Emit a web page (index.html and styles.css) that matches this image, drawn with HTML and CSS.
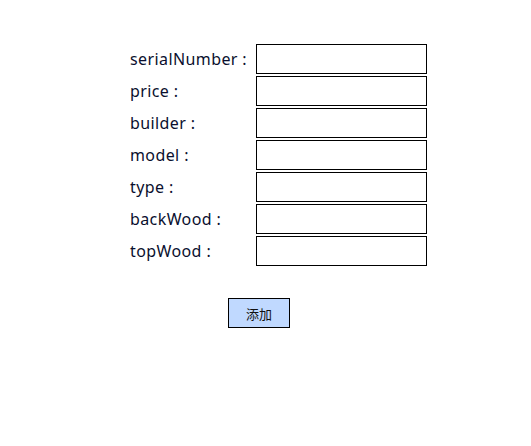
FILE: index.html
```html
<!DOCTYPE html>
<html>
<head>
<meta charset="utf-8">
<link rel="stylesheet" href="styles.css">
</head>
<body>
<form class="form">
  <div class="grid">
    <label class="lbl">serialNumber :</label><input class="inp" type="text">
    <label class="lbl">price :</label><input class="inp" type="text">
    <label class="lbl">builder :</label><input class="inp" type="text">
    <label class="lbl">model :</label><input class="inp" type="text">
    <label class="lbl">type :</label><input class="inp" type="text">
    <label class="lbl">backWood :</label><input class="inp" type="text">
    <label class="lbl">topWood :</label><input class="inp" type="text">
  </div>
  <div class="actions">
    <button class="btn" type="button">添加</button>
  </div>
</form>
</body>
</html>
```
FILE: styles.css
```css
html, body {
  margin: 0;
  padding: 0;
  background: #fff;
}
body {
  font-family: "Noto Sans", "Open Sans", "Noto Sans CJK SC", sans-serif;
  color: #0a0f2e;
}
.form {
  padding: 44px 0 0 130px;
}
.grid {
  display: grid;
  grid-template-columns: 126px 171px;
  grid-auto-rows: 30px;
  row-gap: 2px;
}
.lbl {
  font-size: 16px;
  letter-spacing: 0.4px;
  line-height: 30px;
  white-space: nowrap;
}
.inp {
  box-sizing: border-box;
  width: 171px;
  height: 30px;
  margin: 0;
  border: 1px solid #000;
  padding: 0 4px;
  background: #fff;
  outline: none;
}
.actions {
  padding: 32px 0 0 98px;
}
.btn {
  box-sizing: border-box;
  width: 62px;
  height: 30px;
  margin: 0;
  padding: 0;
  border: 1px solid #000;
  background: #c0d9ff;
  font-family: "Noto Sans CJK SC", sans-serif;
  font-size: 13px;
  color: #111;
}
```
